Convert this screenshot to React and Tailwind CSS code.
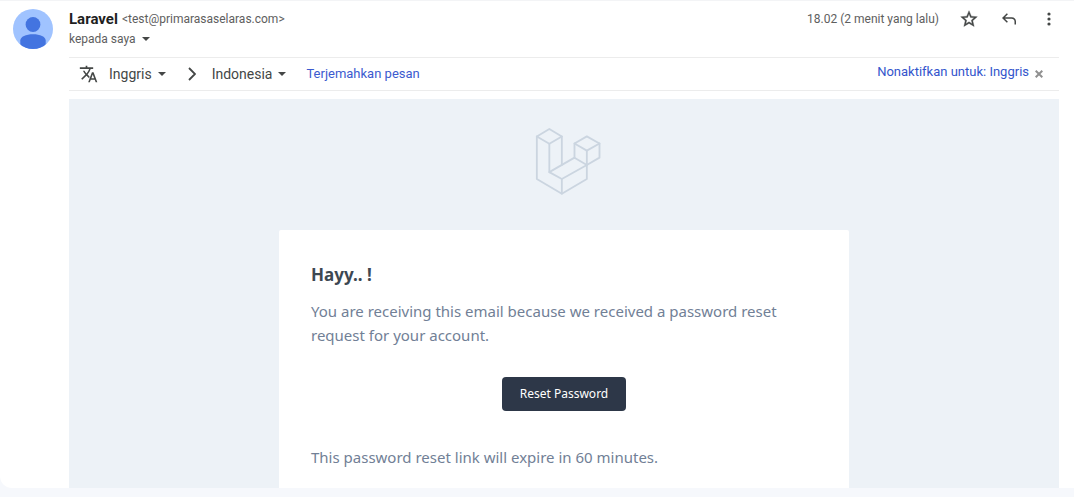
import React from "react";

function Caret() {
  return (
    <svg viewBox="0 0 8 4" className="h-1 w-2 shrink-0 fill-[#444746]" aria-hidden="true">
      <path d="M0 0h8L4 4z" />
    </svg>
  );
}

function Avatar() {
  return (
    <svg viewBox="0 0 40 40" className="size-10 shrink-0" role="img" aria-label="Laravel">
      <defs>
        <clipPath id="avatar-disc">
          <circle cx="20" cy="20" r="20" />
        </clipPath>
      </defs>
      <g clipPath="url(#avatar-disc)">
        <rect width="40" height="40" fill="#a0c3ff" />
        <circle cx="20" cy="15.5" r="7.4" fill="#4374e0" />
        <path d="M7.300 40V31.500C7.300 27.500 13 25.200 20 25.200S32.700 27.500 32.700 31.500V40z" fill="#4374e0" />
      </g>
    </svg>
  );
}

function LaravelMark() {
  return (
    <svg
      viewBox="19.500 27 225 225"
      className="size-[75px]"
      fill="none"
      stroke="#cbd5e0"
      strokeWidth="5.5"
      strokeLinejoin="round"
      strokeLinecap="round"
      role="img"
      aria-label="Laravel Logo"
    >
      <path d="M86.500 42L49 64.500L86.500 86.500L124 64.500Z" />
      <path d="M49 64.500V192L124 236L199 192V150" />
      <path d="M86.500 86.500V171.500L124 192V236" />
      <path d="M124 64.500V150" />
      <path d="M86.500 171.500L162 128L199 150L124 192" />
      <path d="M162 85.500L199 64L237 85.500L199 107Z" />
      <path d="M162 85.500V128M237 85.500V128L199 150V107" />
    </svg>
  );
}

function MessageHeader() {
  return (
    <header className="flex items-start justify-between">
      <div className="min-w-0">
        <div className="flex items-center gap-1 leading-5">
          <h1 className="text-[15px] font-bold text-[#1f1f1f]">Laravel</h1>
          <span className="text-xs text-[#5e5e5e]">&lt;test@primarasaselaras.com&gt;</span>
        </div>
        <button type="button" className="flex items-center gap-1.5 text-xs leading-5 text-[#5e5e5e]">
          kepada saya
          <Caret />
        </button>
      </div>
      <div className="flex items-center text-[#444746]">
        <time className="mr-5 text-xs leading-5 text-[#5e5e5e]">18.02 (2 menit yang lalu)</time>
        <button type="button" aria-label="Beri bintang" className="mr-5">
          <svg viewBox="0 0 24 24" className="size-5 fill-current stroke-current" strokeWidth="0.4">
            <path d="M22 9.240l-7.190-.62L12 2 9.190 8.630 2 9.240l5.460 4.730L5.820 21 12 17.270 18.180 21l-1.630-7.030L22 9.240zM12 15.400l-3.760 2.270 1-4.280-3.320-2.880 4.380-.38L12 6.100l1.710 4.040 4.380.38-3.320 2.880 1 4.280L12 15.400z" />
          </svg>
        </button>
        <button type="button" aria-label="Balas" className="mr-5">
          <svg viewBox="0 0 20 20" className="size-5 fill-current">
            <path d="M15.500 15.500V12.500C15.500 10.800 14.200 9.750 12.500 9.750H5.900L8.900 12.750L7.850 13.800L3 9L7.850 4.200L8.900 5.250L5.900 8.250H12.750C15.300 8.250 17 10 17 12.500V15.500Z" />
          </svg>
        </button>
        <button type="button" aria-label="Lainnya">
          <svg viewBox="0 0 20 20" className="size-5 fill-current">
            <circle cx="10" cy="5" r="1.600" />
            <circle cx="10" cy="10" r="1.600" />
            <circle cx="10" cy="15" r="1.600" />
          </svg>
        </button>
      </div>
    </header>
  );
}

function TranslateBar() {
  return (
    <div className="mt-2 flex h-[34px] items-center border-y border-[#ececec] pr-4 pl-2.5 text-[#444746]">
      <svg viewBox="0 0 24 24" className="mr-2.5 size-5 shrink-0 fill-current" aria-hidden="true">
        <path d="M12.650 15.670c.14-.36.05-.77-.23-1.050l-2.090-2.060.03-.03c1.740-1.940 2.980-4.170 3.710-6.530H17V4h-7V2H8v2H1v2h11.170C11.500 7.920 10.440 9.750 9 11.350 8.070 10.320 7.300 9.190 6.690 8H4.690c.73 1.630 1.730 3.170 2.980 4.560L2.580 17.580 4 19l5-5 3.110 3.110zM17.500 10h-2L11 22h2l1.120-3h4.750L20 22h2zm-2.620 7l1.620-4.330L18.120 17z" />
      </svg>
      <button type="button" className="flex items-center gap-1.5 text-sm">
        Inggris
        <Caret />
      </button>
      <svg viewBox="0 0 8 14" className="mr-4 ml-[22px] h-3.5 w-2 shrink-0" fill="none" stroke="currentColor" strokeWidth="1.800" aria-hidden="true">
        <path d="M1 1l6 6-6 6" />
      </svg>
      <button type="button" className="flex items-center gap-1.5 text-sm">
        Indonesia
        <Caret />
      </button>
      <a href="#terjemahkan" className="ml-5 text-[13px] text-[#3c5bcf]">
        Terjemahkan pesan
      </a>
      <a href="#nonaktifkan" className="mr-1.5 mb-1 ml-auto text-[13px] text-[#3355cc]">
        Nonaktifkan untuk: Inggris
      </a>
      <button type="button" aria-label="Tutup">
        <svg viewBox="0 0 8 8" className="size-2" fill="none" stroke="#909090" strokeWidth="2">
          <path d="M.7.7l6.600 6.600M7.300.7L.7 7.300" />
        </svg>
      </button>
    </div>
  );
}

function MessageBody() {
  return (
    <article className="mt-2 flex flex-col items-center bg-[#edf2f7] pt-[25px] font-['Noto_Sans','Open_Sans',sans-serif]">
      <a href="#laravel">
        <LaravelMark />
      </a>
      <div className="mt-[31px] w-full max-w-[570px] rounded-t-xs bg-white px-8 pt-8 pb-[19px] text-[15px] leading-6 text-[#718096]">
        <h2 className="text-[17px] leading-[26px] font-bold text-[#3d4852]">Hayy.. !</h2>
        <p className="mt-[11px]">
          You are receiving this email because we received a password reset request for your account.
        </p>
        <div className="mt-[30px] mb-[34px] flex justify-center">
          <a
            href="#reset"
            className="rounded-sm bg-[#2d3748] px-[18px] py-[5px] text-xs leading-6 text-white"
          >
            Reset Password
          </a>
        </div>
        <p>This password reset link will expire in 60 minutes.</p>
      </div>
    </article>
  );
}

export default function App() {
  return (
    <div className="min-h-screen bg-[#f6f8fc] font-[Roboto,sans-serif]">
      <main className="flex gap-4 rounded-bl-xl border-t border-[#f3f4f6] bg-white pt-2 pr-[15px] pl-[13px]">
        <Avatar />
        <div className="min-w-0 flex-1">
          <MessageHeader />
          <TranslateBar />
          <MessageBody />
        </div>
      </main>
    </div>
  );
}
